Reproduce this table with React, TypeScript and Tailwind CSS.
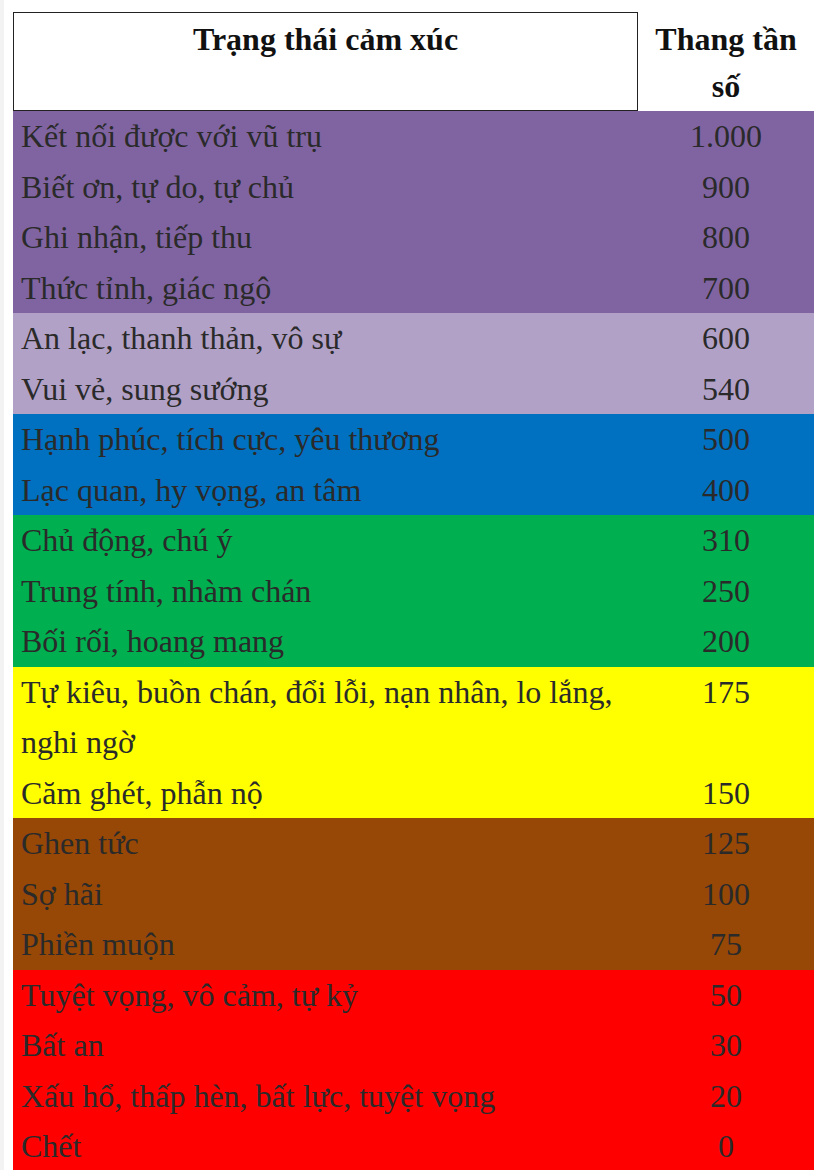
import React from "react";

type Row = { label: string; value: string };
type Group = { color: string; rows: Row[] };

const groups: Group[] = [
  {
    color: "bg-[#8064a2]",
    rows: [
      { label: "Kết nối được với vũ trụ", value: "1.000" },
      { label: "Biết ơn, tự do, tự chủ", value: "900" },
      { label: "Ghi nhận, tiếp thu", value: "800" },
      { label: "Thức tỉnh, giác ngộ", value: "700" },
    ],
  },
  {
    color: "bg-[#b2a1c7]",
    rows: [
      { label: "An lạc, thanh thản, vô sự", value: "600" },
      { label: "Vui vẻ, sung sướng", value: "540" },
    ],
  },
  {
    color: "bg-[#0070c0]",
    rows: [
      { label: "Hạnh phúc, tích cực, yêu thương", value: "500" },
      { label: "Lạc quan, hy vọng, an tâm", value: "400" },
    ],
  },
  {
    color: "bg-[#00b050]",
    rows: [
      { label: "Chủ động, chú ý", value: "310" },
      { label: "Trung tính, nhàm chán", value: "250" },
      { label: "Bối rối, hoang mang", value: "200" },
    ],
  },
  {
    color: "bg-[#ffff00]",
    rows: [
      { label: "Tự kiêu, buồn chán, đổi lỗi, nạn nhân, lo lắng, nghi ngờ", value: "175" },
      { label: "Căm ghét, phẫn nộ", value: "150" },
    ],
  },
  {
    color: "bg-[#974806]",
    rows: [
      { label: "Ghen tức", value: "125" },
      { label: "Sợ hãi", value: "100" },
      { label: "Phiền muộn", value: "75" },
    ],
  },
  {
    color: "bg-[#ff0000]",
    rows: [
      { label: "Tuyệt vọng, vô cảm, tự kỷ", value: "50" },
      { label: "Bất an", value: "30" },
      { label: "Xấu hổ, thấp hèn, bất lực, tuyệt vọng", value: "20" },
      { label: "Chết", value: "0" },
    ],
  },
];

export default function App() {
  return (
    <div className="flex min-h-[1170px] bg-white font-['Liberation_Serif',serif] text-[#2a2a2a]">
      <div className="w-[4px] shrink-0 bg-[#f3f3f3]" />
      <div className="pl-[9px] pt-[12px]">
        <div className="grid grid-cols-[625px_176px] h-[99px] text-[32px] font-bold leading-[47px] text-[#111]">
          <div className="border border-[#222] pt-[3px] text-center">Trạng thái cảm xúc</div>
          <div className="px-2 pt-[4px] text-center">Thang tần số</div>
        </div>
        {groups.map((g, gi) => (
          <div key={gi} className={g.color}>
            {g.rows.map((r) => (
              <div key={r.label} className="grid grid-cols-[625px_176px] text-[32px] leading-[50.5px]">
                <div className="pl-[8px] pr-[20px]">{r.label}</div>
                <div className="text-center">{r.value}</div>
              </div>
            ))}
          </div>
        ))}
      </div>
    </div>
  );
}
